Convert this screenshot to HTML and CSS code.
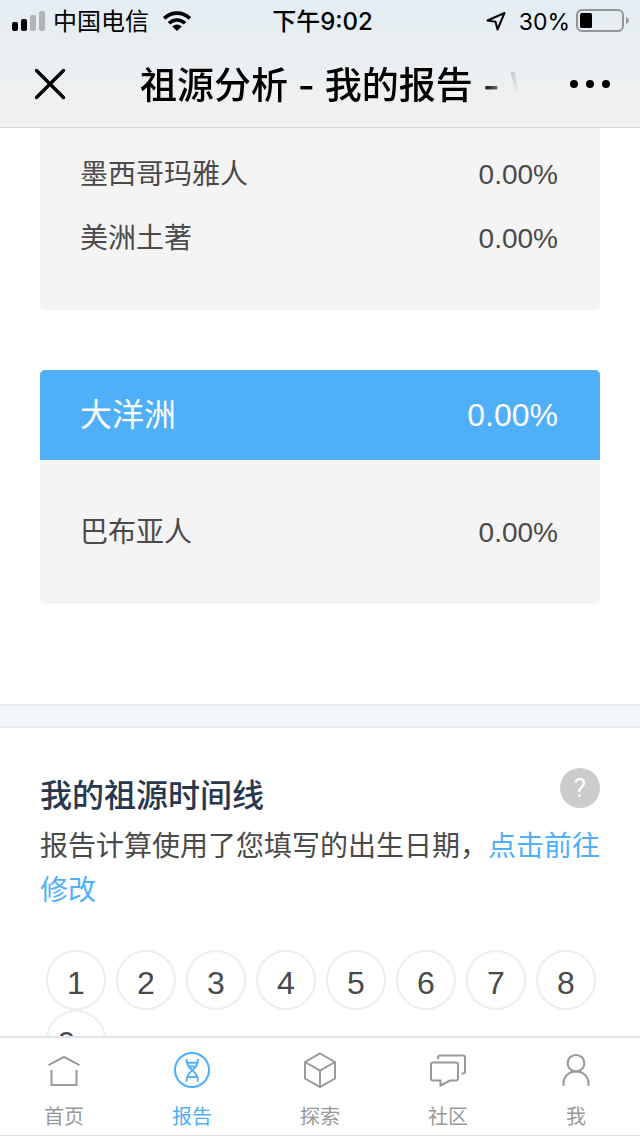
FILE: index.html
```html
<!DOCTYPE html>
<html lang="zh-CN">
<head>
<meta charset="utf-8">
<meta name="viewport" content="width=device-width, initial-scale=1">
<title>祖源分析 - 我的报告</title>
<link rel="stylesheet" href="styles.css">
</head>
<body>
<header class="top">
  <div class="status">
    <div class="status-left">
      <svg width="34" height="20" viewBox="0 0 34 20" aria-hidden="true"><rect x="0" y="11" width="6" height="9" rx="2"/><rect x="9" y="8" width="6" height="12" rx="2"/><g fill="#b0b5b7"><rect x="18" y="4" width="6" height="16" rx="2"/><rect x="27" y="0" width="6" height="20" rx="2"/></g></svg>
      <span class="carrier">中国电信</span>
      <svg class="wifi" width="28" height="20" viewBox="0 0 28 20" aria-hidden="true"><g fill="none" stroke="#000" stroke-width="3.6"><path d="M1.2 7.4C8.3.3 19.7.3 26.8 7.4"/><path d="M6 12.3C10.5 7.9 17.5 7.9 22 12.3"/></g><path d="M9.2 15.4Q14 11.4 18.8 15.4L14 20Z"/></svg>
    </div>
    <time class="clock">下午9:02</time>
    <div class="status-right">
      <svg width="20" height="20" viewBox="0 0 20 20" fill="none" stroke="#000" stroke-width="2" stroke-linejoin="round" aria-hidden="true"><path d="M18.500 2L1.500 9.500L9.500 10.800L11.500 18.500Z"/></svg>
      <span class="charge">30%</span>
      <svg width="53" height="24" viewBox="0 0 53 24" aria-hidden="true"><rect x="1" y="1" width="46" height="21" rx="5" fill="none" stroke="#929698" stroke-width="2"/><rect x="4" y="4" width="12" height="15" rx="1.5"/><path d="M50 8Q53 9.5 53 11.5T50 15Z" fill="#929698"/></svg>
    </div>
  </div>
  <div class="nav">
    <button class="nav-btn" type="button" aria-label="关闭"><svg width="32" height="32" viewBox="0 0 32 32" stroke="#000" stroke-width="3.4" stroke-linecap="round"><path d="M2.5 2.5L29.5 29.5M29.5 2.5L2.5 29.5"/></svg></button>
    <h1 class="nav-title">祖源分析 - 我的报告 - W</h1>
    <button class="nav-btn" type="button" aria-label="更多"><svg width="42" height="10" viewBox="0 0 42 10"><circle cx="5" cy="5" r="4"/><circle cx="21" cy="5" r="4"/><circle cx="37" cy="5" r="4"/></svg></button>
  </div>
</header>

<main class="content">
  <section class="card card-continued">
    <dl class="rows">
      <div class="row"><dt>墨西哥玛雅人</dt><dd>0.00%</dd></div>
      <div class="row"><dt>美洲土著</dt><dd>0.00%</dd></div>
    </dl>
  </section>
  <section class="card">
    <h2 class="card-head"><span>大洋洲</span><span>0.00%</span></h2>
    <dl class="rows">
      <div class="row"><dt>巴布亚人</dt><dd>0.00%</dd></div>
    </dl>
  </section>
  <section class="timeline">
    <div class="timeline-head">
      <h2 class="timeline-title">我的祖源时间线</h2>
      <button class="help" type="button" aria-label="帮助">?</button>
    </div>
    <p class="note">报告计算使用了您填写的出生日期，<a href="#edit">点击前往修改</a></p>
    <div class="steps">
      <button class="step" type="button">1</button>
      <button class="step" type="button">2</button>
      <button class="step" type="button">3</button>
      <button class="step" type="button">4</button>
      <button class="step" type="button">5</button>
      <button class="step" type="button">6</button>
      <button class="step" type="button">7</button>
      <button class="step" type="button">8</button>
      <button class="step" type="button">9~</button>
    </div>
  </section>
</main>

<nav class="tabs">
  <a class="tab" href="#home"><svg class="icon" viewBox="0 0 40 40"><path d="M4.500 15.200L20 6.800L35.500 15.200M7.500 20V35H32.500V20"/></svg>首页</a>
  <a class="tab active" href="#report"><svg class="icon" viewBox="0 0 40 40"><circle cx="20" cy="20" r="17"/><path d="M14.500 9C14.500 16 18 18 20 20S26 24.500 26 31.500M26 9C26 16 22.500 18 20.500 20S14.500 24.500 14.500 31.500M14.500 12.800H26M14.500 27H26M17.500 16.500H23"/></svg>报告</a>
  <a class="tab" href="#explore"><svg class="icon" viewBox="0 0 40 40"><path d="M20 3.500L35 12V28.500L20 37L5 28.500V12ZM5 12L20 20.500L35 12M20 20.500V37"/></svg>探索</a>
  <a class="tab" href="#community"><svg class="icon" viewBox="0 0 40 40"><path d="M10 9V7.500Q10 5.500 12 5.500H35Q37 5.500 37 7.500V21.500Q37 23.500 35 23.500H33.500M5 12.500H28Q30 12.500 30 14.500V28.500Q30 30.500 28 30.500H22L12.500 35.500V30.500H5Q3 30.500 3 28.500V14.500Q3 12.500 5 12.500Z"/></svg>社区</a>
  <a class="tab" href="#me"><svg class="icon" viewBox="0 0 40 40"><circle cx="20" cy="13.200" r="8.300"/><path d="M7.500 36V33.500C7.500 26 13 21.500 20 21.500S32.500 26 32.500 33.500V36"/></svg>我</a>
</nav>
</body>
</html>
```

FILE: styles.css
```css
*,
*::before {
  box-sizing: border-box;
}

body {
  margin: 0;
  height: 100vh;
  display: flex;
  flex-direction: column;
  background: #fff;
  color: #4a4a4a;
  font-family: "Liberation Sans", "Noto Sans CJK SC", sans-serif;
  font-weight: 400;
}

h1, h2, p, dl, dd {
  margin: 0;
}

button {
  padding: 0;
  border: 0;
  background: none;
  color: inherit;
  font: inherit;
}

a {
  color: #4faff9;
  text-decoration: none;
}

svg {
  display: block;
  flex: none;
}

/* Header */
.top {
  flex: none;
  border-bottom: 1px solid #d5d7d8;
  background: linear-gradient(#e3edf3, #edf0f2 60%, #f1f1f1);
  color: #000;
  font-family: Inter, "Noto Sans CJK SC", sans-serif;
}

.status {
  display: grid;
  grid-template-columns: 1fr auto 1fr;
  align-items: center;
  height: 40px;
  padding: 0 11px 0 12px;
  font-size: 24px;
  line-height: 40px;
  font-weight: 400;
}

.carrier,
.clock,
.charge {
  padding-top: 2px;
}

.status-left,
.status-right {
  display: flex;
  align-items: center;
}

.status-left {
  gap: 7px;
}

.wifi {
  margin-left: 7px;
}

.status-right {
  justify-content: flex-end;
  gap: 6px;
}

.charge {
  margin-left: 7px;
  font-size: 23px;
}

.clock {
  padding-left: 4px;
  font-weight: 500;
}

.nav {
  display: flex;
  align-items: center;
  justify-content: space-between;
  height: 87px;
  padding: 0 29px 0 34px;
}

.nav-title {
  flex: 1;
  margin: 0 51px 0 74px;
  padding-top: 4px;
  overflow: hidden;
  white-space: nowrap;
  font-size: 37px;
  line-height: 56px;
  font-weight: 500;
  -webkit-mask-image: linear-gradient(to right, #000 calc(100% - 36px), transparent);
  mask-image: linear-gradient(to right, #000 calc(100% - 36px), transparent);
}

/* Report cards */
.content {
  flex: 1;
  min-height: 0;
  overflow-y: auto;
  scrollbar-width: none;
}

.card {
  margin: 60px 40px 0;
  border-radius: 5px;
  overflow: hidden;
  background: #f4f4f4;
}

.card-continued {
  margin-top: 0;
  border-radius: 0 0 5px 5px;
}

.card-head {
  display: flex;
  justify-content: space-between;
  padding: 0 42px 0 40px;
  background: #4faff9;
  color: #fff;
  font-size: 32px;
  line-height: 90px;
  font-weight: 400;
}

.rows {
  padding: 41px 42px 39px 40px;
}

.card-continued .rows {
  padding-top: 15px;
}

.row {
  display: flex;
  justify-content: space-between;
  font-size: 28px;
  line-height: 64px;
}

/* Timeline */
.timeline {
  margin-top: 100px;
}

.timeline::before {
  content: "";
  display: block;
  height: 24px;
  border: solid #e8edf1;
  border-width: 2px 0;
  background: #f3f7fa;
}

.timeline-head {
  display: flex;
  align-items: flex-start;
  justify-content: space-between;
  padding: 40px 40px 4px;
}

.timeline-title {
  padding-top: 3px;
  color: #28384f;
  font-size: 32px;
  line-height: 50px;
  font-weight: 500;
}

.help {
  width: 40px;
  height: 40px;
  border-radius: 50%;
  background: #ccc;
  color: #fff;
  font-family: Roboto, sans-serif;
  font-size: 26px;
  line-height: 40px;
}

.note {
  padding: 0 36px 0 40px;
  font-size: 28px;
  line-height: 44px;
}

.steps {
  display: flex;
  flex-wrap: wrap;
  column-gap: 10px;
  padding: 37px 40px 20px 46px;
}

.step {
  width: 60px;
  height: 60px;
  padding-top: 6px;
  border: 2px solid #ebeff2;
  border-radius: 50%;
  font-size: 32px;
  line-height: 50px;
}

/* Tab bar */
.tabs {
  flex: none;
  display: flex;
  height: 100px;
  border-top: 2px solid #dfe4e8;
  border-bottom: 1px solid #dcdee0;
  background: #fff;
}

.tab {
  flex: 1;
  display: flex;
  flex-direction: column;
  align-items: center;
  gap: 11px;
  padding-top: 12px;
  color: #999;
  font-size: 20px;
  line-height: 32px;
  font-weight: 400;
}

.tab.active {
  color: #4faff9;
}

.icon {
  width: 40px;
  height: 40px;
  fill: none;
  stroke: currentColor;
  stroke-width: 2;
}
```
